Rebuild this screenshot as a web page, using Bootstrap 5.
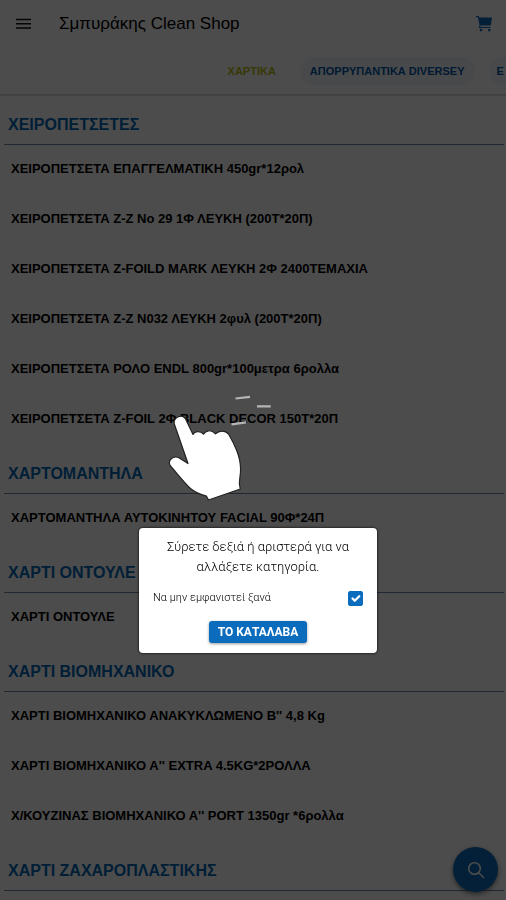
<!DOCTYPE html>
<html lang="el">
<head>
<meta charset="utf-8">
<meta name="viewport" content="width=device-width, initial-scale=1">
<title>Σμπυράκης Clean Shop</title>
<link href="https://cdn.jsdelivr.net/npm/bootstrap@5.3.0/dist/css/bootstrap.min.css" rel="stylesheet">
<style>
  :root { --brand: #0b6cbd; }
  body { font-family: "Liberation Sans", Arial, sans-serif; color: #000; background: #fff; }
  .shop-title { font-size: 17px; line-height: 24px; }
  .top-bar { height: 48px; padding: 0 14px; }
  .top-bar svg, .fab svg { display: block; }
  .menu-btn { width: 45px; }
  .tab-strip { height: 48px; padding-left: 43%; gap: 14px; border-bottom: 2px solid #dedede; }
  .tab-pill { flex: none; padding: 0 10px; font-size: 11px; line-height: 28px; font-weight: 700; color: #0058a8; background: #f0f5fa; border-radius: 14px; text-decoration: none; }
  .tab-pill.active { color: #b8c010; background: none; }
  .tab-pill:last-child { padding: 0 8px; margin-right: -16px; border-radius: 14px 0 0 14px; }
  .group-head { height: 49px; margin: 0 2px 0 4px; padding: 10px 4px 0; font-size: 16px; line-height: 20px; font-weight: 700; color: #0068b8; border-bottom: 1px solid #7088a8; }
  .item-row { height: 50px; padding: 0 11px 2px; font-size: 13px; font-weight: 700; color: #000; text-decoration: none; }
  .fab { position: fixed; right: 8px; bottom: 8px; width: 45px; height: 45px; background: var(--brand); box-shadow: 0 2px 5px rgba(0,0,0,.5); }
  .veil { background: rgba(0,0,0,.7); padding: 16vh 0 0 10px; z-index: 1050; }
  .hint { width: 238px; }
  .hand { display: block; margin-left: 26px; }
  .hint-box { padding: 9px 14px 10px; border-radius: 4px; box-shadow: 0 0 3px #000; font-family: Roboto, sans-serif; }
  .hint-text { font-size: 13px; line-height: 20px; font-weight: 300; color: #000; padding: 0 8px; }
  .hint-label { font-size: 11px; line-height: 18px; font-weight: 300; color: #000; }
  .hint-box .form-check-input { width: 15px; height: 15px; border-radius: 2px; }
  .hint-box .form-check-input:checked { background-color: var(--brand); border-color: var(--brand); background-size: 15px 15px; }
  .ok-btn { font-size: 12px; line-height: 22px; font-weight: 700; padding: 0 9px; color: #fff; background: var(--brand); border-radius: 3px; box-shadow: 0 1px 3px rgba(0,0,0,.4); }
</style>
</head>
<body>
<div class="vh-100 overflow-hidden">
  <header>
    <div class="top-bar d-flex align-items-center">
      <button class="menu-btn btn p-0 border-0" type="button" aria-label="Μενού">
        <svg width="18" height="16" viewBox="0 0 18 16" stroke="#111" stroke-width="1.5"><path d="M2 3.500h15M2 7.700h15M2 12h15"/></svg>
      </button>
      <h1 class="shop-title flex-grow-1 m-0">Σμπυράκης Clean Shop</h1>
      <button class="btn p-0 border-0" type="button" aria-label="Καλάθι">
        <svg width="16" height="16" viewBox="0 0 16 16" fill="#0b6cbd"><path d="M0 0h2.600l.7 1.600H16L14.800 9.600H4.600l-.5 1.300h10.400v1.200H2.900L3.500 9.200 1.900 1.200H0z"/><circle cx="5" cy="14.100" r="1.300"/><circle cx="13.300" cy="14.100" r="1.300"/></svg>
      </button>
    </div>
    <nav class="tab-strip d-flex align-items-center overflow-hidden text-nowrap">
      <a class="tab-pill active" href="#">ΧΑΡΤΙΚΑ</a>
      <a class="tab-pill" href="#">ΑΠΟΡΡΥΠΑΝΤΙΚΑ DIVERSEY</a>
      <a class="tab-pill" href="#">Ε</a>
    </nav>
  </header>
  <main class="text-nowrap">
    <section>
      <h2 class="group-head d-flex align-items-center">ΧΕΙΡΟΠΕΤΣΕΤΕΣ</h2>
      <a class="item-row d-flex align-items-center" href="#">ΧΕΙΡΟΠΕΤΣΕΤΑ ΕΠΑΓΓΕΛΜΑΤΙΚΗ 450gr*12ρολ</a>
      <a class="item-row d-flex align-items-center" href="#">ΧΕΙΡΟΠΕΤΣΕΤΑ Ζ-Ζ Νο 29 1Φ ΛΕΥΚΗ (200Τ*20Π)</a>
      <a class="item-row d-flex align-items-center" href="#">ΧΕΙΡΟΠΕΤΣΕΤΑ Ζ-FOILD MARK ΛΕΥΚΗ 2Φ 2400ΤΕΜΑΧΙΑ</a>
      <a class="item-row d-flex align-items-center" href="#">ΧΕΙΡΟΠΕΤΣΕΤΑ Ζ-Ζ Ν032 ΛΕΥΚΗ 2φυλ (200Τ*20Π)</a>
      <a class="item-row d-flex align-items-center" href="#">ΧΕΙΡΟΠΕΤΣΕΤΑ ΡΟΛΟ ENDL 800gr*100μετρα 6ρολλα</a>
      <a class="item-row d-flex align-items-center" href="#">ΧΕΙΡΟΠΕΤΣΕΤΑ Ζ-FOIL 2Φ BLACK DECOR 150Τ*20Π</a>
    </section>
    <section>
      <h2 class="group-head d-flex align-items-center">ΧΑΡΤΟΜΑΝΤΗΛΑ</h2>
      <a class="item-row d-flex align-items-center" href="#">ΧΑΡΤΟΜΑΝΤΗΛΑ ΑΥΤΟΚΙΝΗΤΟΥ FACIAL 90Φ*24Π</a>
    </section>
    <section>
      <h2 class="group-head d-flex align-items-center">ΧΑΡΤΙ ΟΝΤΟΥΛΕ</h2>
      <a class="item-row d-flex align-items-center" href="#">ΧΑΡΤΙ ΟΝΤΟΥΛΕ</a>
    </section>
    <section>
      <h2 class="group-head d-flex align-items-center">ΧΑΡΤΙ ΒΙΟΜΗΧΑΝΙΚΟ</h2>
      <a class="item-row d-flex align-items-center" href="#">ΧΑΡΤΙ ΒΙΟΜΗΧΑΝΙΚΟ ΑΝΑΚΥΚΛΩΜΕΝΟ Β'' 4,8 Kg</a>
      <a class="item-row d-flex align-items-center" href="#">ΧΑΡΤΙ ΒΙΟΜΗΧΑΝΙΚΟ Α'' EXTRA 4.5KG*2ΡΟΛΛΑ</a>
      <a class="item-row d-flex align-items-center" href="#">Χ/ΚΟΥΖΙΝΑΣ ΒΙΟΜΗΧΑΝΙΚΟ Α'' PORT 1350gr *6ρολλα</a>
    </section>
    <section>
      <h2 class="group-head d-flex align-items-center">ΧΑΡΤΙ ΖΑΧΑΡΟΠΛΑΣΤΙΚΗΣ</h2>
    </section>
  </main>
  <button class="fab btn rounded-circle border-0 p-0 d-flex align-items-center justify-content-center" type="button" aria-label="Αναζήτηση">
    <svg width="18" height="18" viewBox="0 0 18 18" fill="none" stroke="#fff" stroke-width="1.500"><circle cx="7.500" cy="7.500" r="5.800"/><path d="M11.800 11.800 17 17"/></svg>
  </button>
</div>

<div class="veil position-fixed top-0 start-0 w-100 h-100 d-flex align-items-center justify-content-center">
  <div class="hint" role="dialog" aria-modal="true" aria-labelledby="hintText">
    <svg class="hand" width="110" height="137" viewBox="165 391 110 137" aria-hidden="true">
      <path d="M174.300 424C172.800 417.500 182.500 413 185.600 419L193 434.500C194.500 431.500 199.500 430 203.500 434.200C205.500 430.500 211 429 215.500 433.800C219 430.500 225 430 228.500 434C232 440 234.500 445 236.500 450C239 456 240.500 463 240.600 469C240.600 475 239.300 480 239.400 484L240.300 489L208.500 500L206.500 496.200C200 494.500 194.500 492 190.500 488.500C184 482.500 177.500 474 170.500 466C167 461 172.500 455.500 178.500 457.500L188 463.500Z" fill="#fff" stroke="#222" stroke-width="1.200" stroke-linejoin="round"/>
      <path d="M235.500 398.500 250 396.900M257 406.400h13.700M231.500 424.300 246 422.300" stroke="#b5b5b5" stroke-width="2.200" fill="none"/>
    </svg>
    <div class="hint-box bg-white">
      <p class="hint-text text-center m-0" id="hintText">Σύρετε δεξιά ή αριστερά για να αλλάξετε κατηγορία.</p>
      <div class="d-flex align-items-center justify-content-between pt-2 mt-1 pb-1">
        <label class="hint-label" for="hideHint">Να μην εμφανιστεί ξανά</label>
        <input class="form-check-input m-0" type="checkbox" id="hideHint" checked>
      </div>
      <div class="text-center mt-2">
        <button class="ok-btn btn border-0" type="button">ΤΟ ΚΑΤΑΛΑΒΑ</button>
      </div>
    </div>
  </div>
</div>
<script src="https://cdn.jsdelivr.net/npm/bootstrap@5.3.0/dist/js/bootstrap.bundle.min.js"></script>
</body>
</html>
